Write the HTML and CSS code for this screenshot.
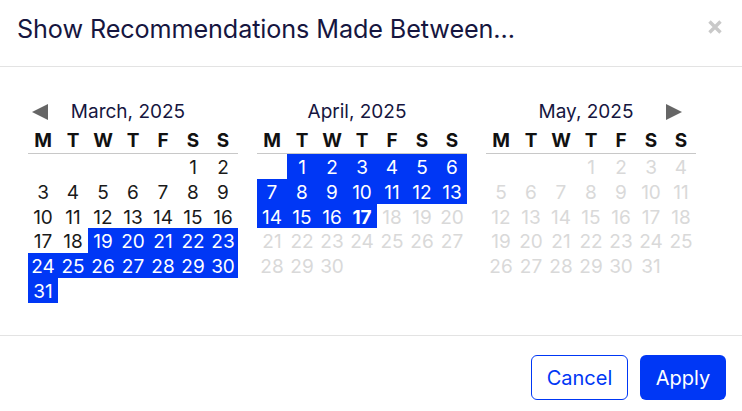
FILE: index.html
```html
<!DOCTYPE html>
<html lang="en">

<head>
    <meta charset="UTF-8">
    <meta name="viewport" content="width=device-width, initial-scale=1.0">
    <title>Show Recommendations Made Between</title>
    <link rel="stylesheet" href="styles.css">
</head>

<body>
    <div class="dialog">
        <div class="dialog-head">
            <h2>Show Recommendations Made Between...</h2>
            <button class="close" aria-label="Close">
                <svg width="16" height="16" viewBox="0 0 16 16">
                    <path d="M2.5 2.5 L13.5 13.5 M13.5 2.5 L2.5 13.5" stroke="#c9c9c9" stroke-width="3.4" />
                </svg>
            </button>
        </div>

        <div class="dialog-body">
            <div class="months">
                <!-- March -->
                <div class="month">
                    <div class="month-title">
                        <span class="nav">
                            <svg width="16" height="16" viewBox="0 0 16 16"><path d="M0 8 L16 0 L16 16 Z" fill="#666" /></svg>
                        </span>
                        <span class="name">March, 2025</span>
                        <span class="nav"></span>
                    </div>
                    <div class="weekdays">
                        <span>M</span><span>T</span><span>W</span><span>T</span><span>F</span><span>S</span><span>S</span>
                    </div>
                    <div class="days">
                        <span class="start-6">1</span><span>2</span>
                        <span>3</span><span>4</span><span>5</span><span>6</span><span>7</span><span>8</span><span>9</span>
                        <span>10</span><span>11</span><span>12</span><span>13</span><span>14</span><span>15</span><span>16</span>
                        <span>17</span><span>18</span><span class="sel">19</span><span class="sel">20</span><span class="sel">21</span><span class="sel">22</span><span class="sel">23</span>
                        <span class="sel">24</span><span class="sel">25</span><span class="sel">26</span><span class="sel">27</span><span class="sel">28</span><span class="sel">29</span><span class="sel">30</span>
                        <span class="sel">31</span>
                    </div>
                </div>

                <!-- April -->
                <div class="month">
                    <div class="month-title">
                        <span class="nav"></span>
                        <span class="name">April, 2025</span>
                        <span class="nav"></span>
                    </div>
                    <div class="weekdays">
                        <span>M</span><span>T</span><span>W</span><span>T</span><span>F</span><span>S</span><span>S</span>
                    </div>
                    <div class="days">
                        <span class="sel start-2">1</span><span class="sel">2</span><span class="sel">3</span><span class="sel">4</span><span class="sel">5</span><span class="sel">6</span>
                        <span class="sel">7</span><span class="sel">8</span><span class="sel">9</span><span class="sel">10</span><span class="sel">11</span><span class="sel">12</span><span class="sel">13</span>
                        <span class="sel">14</span><span class="sel">15</span><span class="sel">16</span><span class="sel today">17</span><span class="off">18</span><span class="off">19</span><span class="off">20</span>
                        <span class="off">21</span><span class="off">22</span><span class="off">23</span><span class="off">24</span><span class="off">25</span><span class="off">26</span><span class="off">27</span>
                        <span class="off">28</span><span class="off">29</span><span class="off">30</span>
                    </div>
                </div>

                <!-- May -->
                <div class="month">
                    <div class="month-title">
                        <span class="nav"></span>
                        <span class="name">May, 2025</span>
                        <span class="nav">
                            <svg width="16" height="16" viewBox="0 0 16 16"><path d="M16 8 L0 0 L0 16 Z" fill="#666" /></svg>
                        </span>
                    </div>
                    <div class="weekdays">
                        <span>M</span><span>T</span><span>W</span><span>T</span><span>F</span><span>S</span><span>S</span>
                    </div>
                    <div class="days">
                        <span class="off start-4">1</span><span class="off">2</span><span class="off">3</span><span class="off">4</span>
                        <span class="off">5</span><span class="off">6</span><span class="off">7</span><span class="off">8</span><span class="off">9</span><span class="off">10</span><span class="off">11</span>
                        <span class="off">12</span><span class="off">13</span><span class="off">14</span><span class="off">15</span><span class="off">16</span><span class="off">17</span><span class="off">18</span>
                        <span class="off">19</span><span class="off">20</span><span class="off">21</span><span class="off">22</span><span class="off">23</span><span class="off">24</span><span class="off">25</span>
                        <span class="off">26</span><span class="off">27</span><span class="off">28</span><span class="off">29</span><span class="off">30</span><span class="off">31</span>
                    </div>
                </div>
            </div>
        </div>

        <div class="dialog-foot">
            <button class="btn btn-outline">Cancel</button>
            <button class="btn btn-primary">Apply</button>
        </div>
    </div>
</body>

</html>
```

FILE: styles.css
```css
body {
    margin: 0;
    background-color: #fff;
    font-family: Inter, "Noto Sans", sans-serif;
}

.dialog {
    width: 742px;
    height: 411px;
    display: flex;
    flex-direction: column;
}

.dialog-head {
    height: 67px;
    display: flex;
    align-items: center;
    justify-content: space-between;
    padding: 0 19px 0 17px;
    border-bottom: 1px solid #e3e3e3;
    box-sizing: border-box;
    flex: none;
}

.dialog-head h2 {
    margin: 0 0 8px 0;
    font-size: 25.2px;
    font-weight: 400;
    color: #16163f;
    letter-spacing: -0.1px;
}

.close {
    background: none;
    border: none;
    padding: 0;
    width: 16px;
    height: 16px;
    margin-bottom: 12px;
    cursor: pointer;
}

.close svg {
    display: block;
}

.dialog-body {
    height: 269px;
    padding: 33px 0 0 28px;
    box-sizing: border-box;
    border-bottom: 1px solid #e3e3e3;
    flex: none;
}

.months {
    display: flex;
    gap: 19px;
}

.month {
    width: 210px;
}

.month-title {
    display: flex;
    align-items: center;
    height: 24px;
}

.month-title .nav {
    width: 30px;
    height: 16px;
    flex: none;
}

.month-title .nav svg {
    display: block;
}

.month-title .nav:first-child svg {
    margin-left: 4px;
}

.month-title .name {
    flex: 1;
    text-align: center;
    padding-right: 10px;
    font-size: 19px;
    color: #16163f;
    line-height: 24px;
}

.weekdays,
.days {
    display: grid;
    grid-template-columns: repeat(7, 30px);
}

.weekdays {
    padding: 5px 0 0;
    height: 30px;
    box-sizing: border-box;
    border-bottom: 1px solid #c8c8c8;
}

.weekdays span {
    text-align: center;
    font-size: 19px;
    font-weight: 700;
    line-height: 24px;
    color: #111;
}

.days {
    grid-auto-rows: 24.8px;
}

.days span {
    text-align: center;
    font-size: 19px;
    line-height: 27px;
    color: #1a1a1a;
}

.days .sel {
    background-color: #0037f5;
    color: #fff;
}

.days .today {
    font-weight: 700;
}

.days .off {
    color: #d9d9d9;
}

.start-2 {
    grid-column-start: 2;
}

.start-4 {
    grid-column-start: 4;
}

.start-6 {
    grid-column-start: 6;
}

.dialog-foot {
    display: flex;
    justify-content: flex-end;
    gap: 12px;
    padding: 19px 16px 0 0;
}

.btn {
    height: 45px;
    border-radius: 6px;
    font-family: Inter, "Noto Sans", sans-serif;
    font-size: 20px;
    padding: 0;
    cursor: pointer;
}

.btn-outline {
    width: 97px;
    background-color: #fff;
    color: #0037f5;
    border: 1px solid #0037f5;
}

.btn-primary {
    width: 86px;
    background-color: #0037f5;
    color: #fff;
    border: none;
}
```
